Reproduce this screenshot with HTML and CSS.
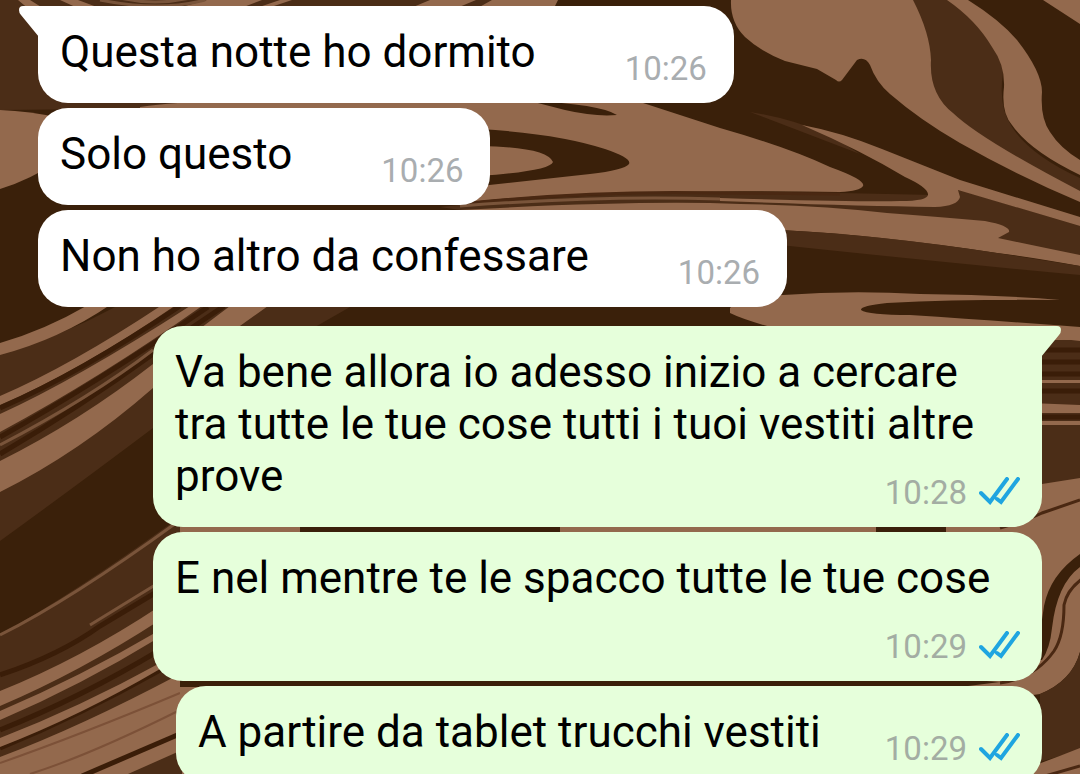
FILE: index.html
```html
<!DOCTYPE html>
<html lang="it">
<head>
    <meta charset="UTF-8">
    <meta name="viewport" content="width=device-width, initial-scale=1.0">
    <title>Chat</title>
    <link rel="stylesheet" href="styles.css">
</head>
<body>
    <!-- Marble wallpaper -->
    <svg class="wallpaper" viewBox="0 0 1080 774" preserveAspectRatio="xMidYMid slice" aria-hidden="true">
        <!-- top left -->
        <path class="mid" d="M0 0H558L520 30L300 104Q150 112 100 109L0 110Z"/>
        <path class="light" d="M0 110Q30 111 60 118V160Q30 180 0 189Z"/>
        <path class="light" d="M18 0H30L46 10H30ZM60 0H78L105 10H82ZM207 0H262L236 10H170ZM280 0H292L262 10H250ZM430 0H476L452 10H406ZM492 0H558L553 10H474Z"/>
        <path class="line" d="M100 0Q160 12 205 0M120 -2Q155 6 190 -2"/>

        <!-- centre -->
        <path class="light" d="M140 107Q180 101 240 102H640L720 128Q790 148 830 167Q866 180 863 186Q860 191 840 192Q590 188 460 203V108H140Z"/>
        <path class="dark" d="M530 101Q600 104 617 115Q595 117 565 110ZM480 129Q560 134 605 149Q632 158 629 164Q624 170 590 174L480 186V176Q550 171 553 162Q547 147 480 146Z"/>
        <path class="mid" d="M440 207Q600 189 840 193L935 195L960 190L1080 226V258L880 240L720 209L460 210Z"/>
        <path class="vein-thin" d="M460 204Q590 190 720 193L840 194"/>
        <path class="line" d="M460 206Q600 195 720 199"/>
        <path class="light" d="M460 210Q640 200 740 204Q820 205 887 213Q940 217 985 221Q1011 226 1009 232L998 238Q1040 247 1080 255V266Q1030 257 997 253Q880 235 780 230H460Z"/>
        <path class="mid" d="M780 230Q880 235 997 253L1080 266V275Q950 263 780 245Z"/>
        <path class="mid" d="M750 112Q790 118 830 135L860 154Z"/>
        <path class="light" d="M802 125Q840 132 882 149L960 180L1080 217V226L958 190L960 197Q958 206 935 207Q850 206 720 201V198Q860 202 900 201Q929 201 928 194Q927 187 905 177Q860 150 802 125Z"/>
        <path class="light" d="M730 308Q740 296 783 295Q850 290 920 294Q1000 295 1060 300Q970 299 887 303Q860 306 861 310Q868 315 910 315Q1000 321 1080 327V340H820Q750 323 730 313Z"/>

        <!-- top right -->
        <path class="mid" d="M905 0H950Q1003 45 1003 73Q998 107 1012 127Q1030 155 1080 178V195L1000 156L935 110Z"/>
        <path class="light" d="M731 0H913Q930 33 931 60Q929 94 953 113Q980 139 1080 191V202Q1020 177 960 143Q920 120 890 94Q876 82 870 65Q865 56 857 60L842 80Q839 83 836 80L817 69L785 61Q760 51 745 37Q730 22 731 0Z"/>
        <path class="light" d="M947 0H968Q1000 20 1017 40Q1042 72 1042 92Q1040 118 1050 132Q1060 148 1080 160V175Q1030 151 1012 125Q1001 112 1004 87Q1005 65 992 47Q976 20 947 0Z"/>
        <path class="light" d="M1043 0H1080V24Z"/>

        <!-- left veins -->
        <path class="mid" d="M0 354Q60 337 115 307H350Q250 363 153 428Q80 483 0 541Z"/>
        <path class="light" d="M0 343Q45 330 88 305H110Q60 339 0 355ZM0 396Q70 366 162 305H176Q80 371 0 405ZM0 414Q75 380 190 306H202Q100 378 0 432ZM0 461Q80 421 153 364L230 306H268L153 388Q80 452 0 492Z"/>
        <path class="vein" d="M0 408Q80 373 180 306M0 437Q90 387 208 307M0 454Q80 407 153 354L224 306"/>
        <path class="line" d="M0 445Q90 398 153 350"/>
        <path class="mid" d="M0 635Q80 589 170 524H300V774H0Z"/>
        <path class="line" d="M0 635Q70 600 176 523M90 625L160 582"/>
        <path class="vein" d="M0 675Q60 655 100 626L160 590M0 730Q80 698 160 650M0 748Q80 715 160 670"/>
        <path class="light" d="M0 691Q80 659 160 606V620Q80 672 0 706ZM0 711Q80 677 160 630V637Q80 686 0 720ZM0 738Q80 707 160 663V669Q80 716 0 747ZM0 757Q80 727 180 674H300V774H0Z"/>
        <path class="hair" d="M0 763Q80 735 180 693M30 774Q90 755 180 710"/>
        <path class="vein" d="M82 776L182 733"/>
        <path class="mid" d="M128 774L182 750V774Z"/>

        <!-- right veins -->
        <path class="mid" d="M1000 340H1080V500H1000Z"/>
        <path class="vein" d="M1030 350H1080M1030 362H1080M1030 374H1080M1030 391H1080M1030 417H1080"/>
        <path class="light" d="M1030 327H1080V341L1036 336ZM1030 380H1080V383H1030ZM1030 403L1080 405V413H1030ZM1030 421H1080V425H1030ZM180 526H1000V490L1042 484L1080 478V652Q1072 681 1040 694L1000 700H180V526Z"/>
        <path class="vein-thin" d="M1000 528Q1030 519 1042 513L1080 500"/>
        <path class="dark" d="M876 525H946V533H876ZM300 525H560V533H300ZM1080 554Q1050 575 1044 606L1036 660H1042Q1050 648 1052 628Q1057 584 1080 567ZM180 679H960L1000 682L960 687H180Z"/>
        <path class="vein-thin" d="M1082 579Q1067 590 1064 605Q1064 636 1054 651Q1035 678 1000 683"/>
        <path class="mid" d="M1080 652Q1072 681 1040 694V762L1080 750Z"/>
        <path class="light" d="M1030 767Q1055 758 1080 748V774H1030Z"/>
        <path class="vein-thin" d="M1045 776L1080 766"/>
    </svg>

    <main class="chat">
        <!-- Received -->
        <div class="message received first">
            <svg class="tail" viewBox="0 0 20 31" aria-hidden="true"><path d="M20 0H4Q0 0 0 4Q0 7 2 9L20 31Z"/></svg>
            <p>Questa notte ho dormito<span class="meta"><time datetime="10:26">10:26</time></span></p>
        </div>
        <div class="message received">
            <p>Solo questo<span class="meta"><time datetime="10:26">10:26</time></span></p>
        </div>
        <div class="message received">
            <p>Non ho altro da confessare<span class="meta"><time datetime="10:26">10:26</time></span></p>
        </div>

        <!-- Sent -->
        <div class="message sent first">
            <svg class="tail" viewBox="0 0 20 31" aria-hidden="true"><path d="M0 0H16Q20 0 20 4Q20 7 18 9L0 31Z"/></svg>
            <p>Va bene allora io adesso inizio a cercare tra tutte le tue cose tutti i tuoi vestiti altre prove<span class="meta"><time datetime="10:28">10:28</time><svg class="ticks" viewBox="0 0 41 28" role="img" aria-label="Letto"><path d="M2 16L11 25L28 2M18 22L22 25L39 2"/></svg></span></p>
        </div>
        <div class="message sent">
            <p>E nel mentre te le spacco tutte le tue cose<span class="meta"><time datetime="10:29">10:29</time><svg class="ticks" viewBox="0 0 41 28" role="img" aria-label="Letto"><path d="M2 16L11 25L28 2M18 22L22 25L39 2"/></svg></span></p>
        </div>
        <div class="message sent">
            <p>A partire da tablet trucchi vestiti<span class="meta"><time datetime="10:29">10:29</time><svg class="ticks" viewBox="0 0 41 28" role="img" aria-label="Letto"><path d="M2 16L11 25L28 2M18 22L22 25L39 2"/></svg></span></p>
        </div>
    </main>
</body>
</html>
```
FILE: styles.css
```css
* {
    box-sizing: border-box;
}
body {
    margin: 0;
    height: 100vh;
    overflow: hidden;
    background-color: #3a200a;
    font-family: Roboto, "Liberation Sans", sans-serif;
    color: #000;
}

/* Wallpaper */
.wallpaper {
    position: absolute;
    top: 0;
    left: 0;
    width: 100%;
    height: 100%;
    z-index: -1;
}
.dark {
    fill: #3a200a;
}
.mid {
    fill: #4b2d17;
}
.light {
    fill: #93694d;
}
.line,
.vein,
.vein-thin,
.hair {
    fill: none;
    stroke-width: 3px;
}
.line {
    stroke: #79543a;
}
.vein {
    stroke: #3a1d08;
    stroke-width: 5px;
}
.vein-thin {
    stroke: #4a2812;
}
.hair {
    stroke: #7c5138;
    stroke-width: 2px;
}

/* Messages */
.chat {
    display: flex;
    flex-direction: column;
    gap: 5px;
    padding: 6px 38px;
}
.message {
    position: relative;
    flex-shrink: 0;
    max-width: calc(100% - 115px);
    padding: 20px 22px 8px;
    border-radius: 30px;
}
.message p {
    display: flow-root;
    margin: 0;
    font-size: 44px;
    line-height: 52px;
}
.received {
    align-self: flex-start;
    padding-right: 27px;
    background-color: #fff;
    fill: #fff;
}
.sent {
    align-self: flex-end;
    background-color: #e6ffdb;
    fill: #e6ffdb;
}
.received.first {
    border-top-left-radius: 0;
}
.sent.first {
    margin-top: 14px;
    border-top-right-radius: 0;
}
.tail {
    position: absolute;
    top: 0;
    width: 20px;
    height: 31px;
}
.received .tail {
    right: calc(100% - 1px);
}
.sent .tail {
    left: calc(100% - 1px);
}

/* Time and ticks sit on the last line when there is room */
.meta {
    float: right;
    display: flex;
    align-items: center;
    gap: 12px;
    margin-left: 89px;
    padding-top: 17px;
    font-size: 33px;
    color: #a9adb0;
}
.sent .meta {
    margin-left: 64px;
    color: #a3ada3;
}
.ticks {
    width: 41px;
    height: 28px;
    margin-bottom: 4px;
    fill: none;
    stroke: #1fa5e0;
    stroke-width: 4px;
    stroke-linecap: round;
}
```
